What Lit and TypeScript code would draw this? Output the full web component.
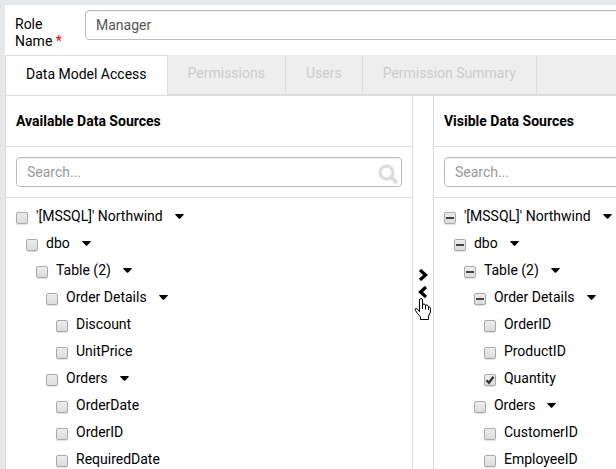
import { LitElement, html, svg, css, nothing } from "lit";
import { customElement, property } from "lit/decorators.js";

type Mark = "off" | "on" | "mixed";

interface TreeNode {
  label: string;
  mark?: Mark;
  children?: TreeNode[];
}

const available: TreeNode[] = [
  {
    label: "'[MSSQL]' Northwind",
    children: [
      {
        label: "dbo",
        children: [
          {
            label: "Table (2)",
            children: [
              {
                label: "Order Details",
                children: [{ label: "Discount" }, { label: "UnitPrice" }],
              },
              {
                label: "Orders",
                children: [{ label: "OrderDate" }, { label: "OrderID" }, { label: "RequiredDate" }],
              },
            ],
          },
        ],
      },
    ],
  },
];

const visible: TreeNode[] = [
  {
    label: "'[MSSQL]' Northwind",
    mark: "mixed",
    children: [
      {
        label: "dbo",
        mark: "mixed",
        children: [
          {
            label: "Table (2)",
            mark: "mixed",
            children: [
              {
                label: "Order Details",
                mark: "mixed",
                children: [
                  { label: "OrderID" },
                  { label: "ProductID" },
                  { label: "Quantity", mark: "on" },
                ],
              },
              {
                label: "Orders",
                children: [{ label: "CustomerID" }, { label: "EmployeeID" }],
              },
            ],
          },
        ],
      },
    ],
  },
];

const tabs = ["Data Model Access", "Permissions", "Users", "Permission Summary"];

@customElement("source-panel")
class SourcePanel extends LitElement {
  @property() heading = "";
  @property({ attribute: false }) nodes: TreeNode[] = [];

  static styles = css`
    :host {
      display: block;
      border: 1px solid #ddd;
      border-width: 0 1px;
      background: #fff;
      min-width: 0;
    }
    h2 {
      margin: 0;
      padding: 15px 10px;
      font-size: 14px;
      line-height: 20px;
      font-weight: 700;
      border-bottom: 1px solid #ddd;
    }
    .search {
      position: relative;
      padding: 10px;
      border-bottom: 1px solid #ddd;
    }
    .search input {
      display: block;
      box-sizing: border-box;
      width: 100%;
      height: 30px;
      padding: 0 10px;
      border: 1px solid #bbb;
      border-radius: 4px;
      background: #fff;
      color: #555;
      font: inherit;
      outline: 0;
      box-shadow: inset 0 1px 1px rgba(0, 0, 0, 0.06);
    }
    .search input::placeholder {
      color: #999;
      opacity: 1;
    }
    .search svg {
      position: absolute;
      right: 14px;
      top: 17px;
      width: 20px;
      height: 20px;
    }
    ul {
      list-style: none;
      margin: 0;
      padding: 0 0 0 10px;
    }
    .tree {
      padding-top: 5px;
    }
    .row {
      display: flex;
      align-items: center;
      height: 27px;
      white-space: nowrap;
    }
    label {
      display: flex;
      align-items: center;
      gap: 8px;
    }
    .box {
      display: grid;
      width: 12px;
      height: 12px;
      margin-top: 3px;
    }
    .box > * {
      grid-area: 1 / 1;
    }
    .box input {
      appearance: none;
      box-sizing: border-box;
      width: 12px;
      height: 12px;
      margin: 0;
      border: 1px solid #a9a9a9;
      border-radius: 2px;
      background: linear-gradient(#ededed, #dcdcdc);
      box-shadow: 0 1px 1px rgba(0, 0, 0, 0.12);
    }
    .box svg {
      width: 12px;
      height: 12px;
      pointer-events: none;
    }
    .toggle {
      display: flex;
      align-items: center;
      margin: 0 0 0 12px;
      padding: 0;
      border: 0;
      background: none;
    }
    .toggle svg {
      width: 9px;
      height: 5px;
    }
  `;

  private glyph(mark: Mark) {
    if (mark === "mixed") return svg`<svg viewBox="0 0 12 12"><path d="M2 5h8v2H2z" fill="#444"/></svg>`;
    if (mark === "on")
      return svg`<svg viewBox="0 0 12 12"><path d="M2.5 6.2 5 8.7 9.5 2.8" fill="none" stroke="#333" stroke-width="2.3"/></svg>`;
    return nothing;
  }

  private branch(nodes: TreeNode[], root = false): unknown {
    return html`<ul class=${root ? "tree" : "group"}>
      ${nodes.map((n) => {
        const mark = n.mark ?? "off";
        return html`<li>
          <div class="row">
            <label
              ><span class="box"
                ><input type="checkbox" .checked=${mark === "on"} .indeterminate=${mark === "mixed"} />${this.glyph(mark)}</span
              ><span>${n.label}</span></label
            >
            ${n.children
              ? html`<button class="toggle" type="button" aria-label="Collapse ${n.label}">
                  <svg viewBox="0 0 9 5"><path d="M.3 0h8.400v.8L5 4.800H4L.3.8z" /></svg>
                </button>`
              : nothing}
          </div>
          ${n.children ? this.branch(n.children) : nothing}
        </li>`;
      })}
    </ul>`;
  }

  render() {
    return html`
      <h2>${this.heading}</h2>
      <div class="search">
        <input type="text" placeholder="Search..." aria-label="Search ${this.heading}" />
        <svg viewBox="0 0 20 20" fill="none" stroke="#ddd">
          <circle cx="8.5" cy="8.5" r="6.5" stroke-width="3.4" />
          <path d="M13 13l4.800 4.800" stroke-width="4" stroke-linecap="round" />
        </svg>
      </div>
      ${this.branch(this.nodes, true)}
    `;
  }
}

@customElement("app-root")
class AppRoot extends LitElement {
  static styles = css`
    :host {
      display: block;
      box-sizing: border-box;
      height: 100vh;
      padding: 5px 0 0 5px;
      overflow: hidden;
      background: #e4e8eb;
      color: #000;
      font: 14px/17px Roboto, sans-serif;
    }
    .page {
      display: flex;
      flex-direction: column;
      width: 136.8%;
      min-height: 100%;
      background: #fff;
    }
    .role {
      display: flex;
      align-items: flex-start;
      height: 45px;
      padding: 5px 10px 0;
    }
    .role label {
      width: 60px;
      margin-right: 10px;
      padding-top: 6px;
    }
    .star {
      color: #f00;
    }
    .role input {
      flex: 1;
      box-sizing: border-box;
      height: 30px;
      padding: 0 10px;
      border: 1px solid #bbb;
      border-radius: 4px;
      color: #555;
      font: inherit;
      outline: 0;
      box-shadow: inset 0 1px 1px rgba(0, 0, 0, 0.06);
    }
    .tabs {
      display: flex;
      height: 41px;
      box-sizing: border-box;
      background: #eee;
      border-bottom: 2px solid #ddd;
    }
    .tab {
      box-sizing: border-box;
      height: 39px;
      padding: 0 20px 3px;
      border: 0;
      border-right: 1px solid #ddd;
      background: none;
      color: #ccc;
      font: inherit;
      white-space: nowrap;
    }
    .tab.active {
      height: 41px;
      border: 1px solid #ddd;
      padding-bottom: 2px;
      background: #fff;
      color: #000;
    }
    .panels {
      flex: 1;
      display: grid;
      grid-template-columns: minmax(0, 1fr) 20px minmax(0, 1fr);
    }
    .movers {
      position: relative;
      display: flex;
      flex-direction: column;
      align-items: center;
      gap: 5px;
      padding-top: 173px;
    }
    .movers button {
      display: flex;
      padding: 0;
      border: 0;
      background: none;
    }
    .movers button svg {
      width: 10px;
      height: 12px;
    }
    .cursor {
      position: absolute;
      left: 1px;
      top: 202px;
      width: 17px;
      height: 22px;
    }
  `;

  render() {
    return html`
      <div class="page">
        <div class="role">
          <label for="role">Role<br />Name <span class="star">*</span></label>
          <input id="role" type="text" .value=${"Manager"} />
        </div>
        <div class="tabs" role="tablist">
          ${tabs.map(
            (t, i) =>
              html`<button type="button" role="tab" aria-selected=${i === 0} class="tab ${i === 0 ? "active" : ""}">${t}</button>`
          )}
        </div>
        <div class="panels">
          <source-panel heading="Available Data Sources" .nodes=${available}></source-panel>
          <div class="movers">
            <button type="button" aria-label="Add to visible">
              <svg viewBox="0 0 10 12" fill="none" stroke="#000" stroke-width="3.2"><path d="M2 1l5.5 5L2 11" /></svg>
            </button>
            <button type="button" aria-label="Remove from visible">
              <svg viewBox="0 0 10 12" fill="none" stroke="#000" stroke-width="3.2"><path d="M8 1L2.500 6 8 11" /></svg>
            </button>
            <svg class="cursor" viewBox="0 0 17 22" aria-hidden="true">
              <path
                d="M5.500 14V2Q5.500.5 7 .5T8.500 2V7Q8.500 6 10 6T11.500 8Q11.500 6.500 13 7T14.500 9Q16.500 8.500 16.500 10.500V14L14.500 18V21.500H6.500V19L3.500 15.500 1.500 12.500Q.5 10.500 2 10.500T5.500 13.500M8.500 6v5M11.500 7.500v4M14.500 9v3"
                fill="#fff"
                stroke="#000"
              />
            </svg>
          </div>
          <source-panel heading="Visible Data Sources" .nodes=${visible}></source-panel>
        </div>
      </div>
    `;
  }
}
